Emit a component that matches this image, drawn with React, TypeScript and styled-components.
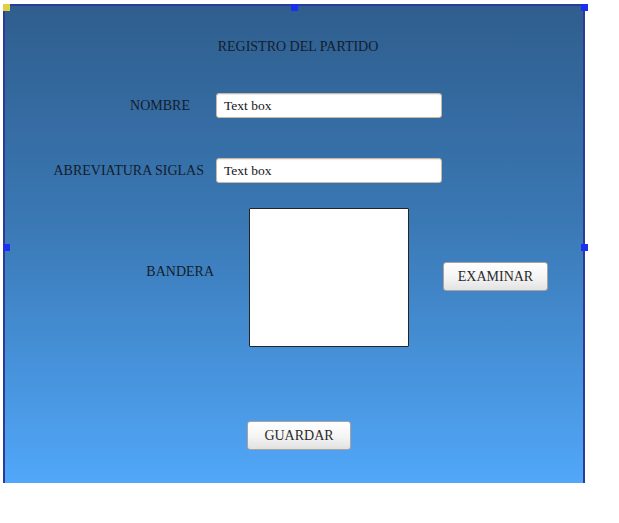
import React from "react";
import styled, { createGlobalStyle } from "styled-components";

const Global = createGlobalStyle`
  html, body { margin: 0; padding: 0; background: #ffffff; }
  body { font-family: "Liberation Serif", "Times New Roman", serif; }
`;

const Frame = styled.div`
  position: relative;
  margin: 4px 0 0 3px;
  width: 578px;
  height: 477px;
  border-left: 2px solid #2b3b98;
  border-right: 2px solid #2b3b98;
  border-top: 2px solid #2b3b98;
  background: linear-gradient(to bottom, #2f5e8e 0%, #3a78b4 45%, #51a7f9 100%);
  display: flex;
  flex-direction: column;
  align-items: stretch;
  color: #141c2c;
  font-size: 14px;
`;

const Handle = styled.span<{ $x: string; $y: string; $c?: string }>`
  position: absolute;
  width: 7px;
  height: 7px;
  left: ${(p) => p.$x};
  top: ${(p) => p.$y};
  background: ${(p) => p.$c || "#1c2ff0"};
`;

const Title = styled.div`
  margin-top: 33px;
  padding-left: 8px;
  text-align: center;
  height: 16px;
  line-height: 16px;
`;

const Row = styled.div<{ $top: number }>`
  display: flex;
  align-items: center;
  margin-top: ${(p) => p.$top}px;
`;

const Label = styled.div<{ $right: number }>`
  width: ${(p) => 211 - p.$right}px;
  padding-right: ${(p) => p.$right}px;
  text-align: right;
  white-space: nowrap;
`;

const TextBox = styled.div`
  box-sizing: border-box;
  width: 226px;
  height: 25px;
  background: #ffffff;
  border: 1px solid #c8b8a4;
  border-radius: 3px;
  box-shadow: inset 0 1px 1px rgba(0, 0, 0, 0.08);
  padding-left: 7px;
  line-height: 23px;
  font-size: 13.5px;
  color: #141414;
`;

const ImageBox = styled.div`
  box-sizing: border-box;
  width: 160px;
  height: 139px;
  background: #ffffff;
  border: 1.5px solid #222428;
  border-radius: 1px;
  margin-left: 33px;
`;

const Button = styled.button<{ $w: number }>`
  box-sizing: border-box;
  width: ${(p) => p.$w}px;
  height: 29px;
  font-family: "Liberation Serif", "Times New Roman", serif;
  font-size: 14px;
  color: #2a2a2a;
  background: linear-gradient(to bottom, #ffffff 0%, #f4f4f4 55%, #e2e2e2 100%);
  border: 1px solid #a9a39b;
  border-radius: 3px;
  padding: 0;
  cursor: pointer;
`;

const BanderaLabel = styled(Label)`
  margin-top: -12px;
`;

const SideButton = styled.div`
  margin-left: 34px;
  margin-top: -2px;
`;

const Footer = styled.div`
  display: flex;
  justify-content: flex-start;
  padding-left: 242px;
  margin-top: 74px;
`;

export default function App() {
  return (
    <>
      <Global />
      <Frame>
        <Handle $x="-2px" $y="-2px" $c="#e0d040" />
        <Handle $x="286px" $y="-2px" />
        <Handle $x="576px" $y="-2px" />
        <Handle $x="-2px" $y="238px" />
        <Handle $x="576px" $y="238px" />
        <Title>REGISTRO DEL PARTIDO</Title>
        <Row $top={38}>
          <Label $right={26}>NOMBRE</Label>
          <TextBox>Text box</TextBox>
        </Row>
        <Row $top={40}>
          <Label $right={12}>ABREVIATURA SIGLAS</Label>
          <TextBox>Text box</TextBox>
        </Row>
        <Row $top={25}>
          <BanderaLabel $right={2}>BANDERA</BanderaLabel>
          <ImageBox />
          <SideButton>
            <Button $w={105}>EXAMINAR</Button>
          </SideButton>
        </Row>
        <Footer>
          <Button $w={104}>GUARDAR</Button>
        </Footer>
      </Frame>
    </>
  );
}
